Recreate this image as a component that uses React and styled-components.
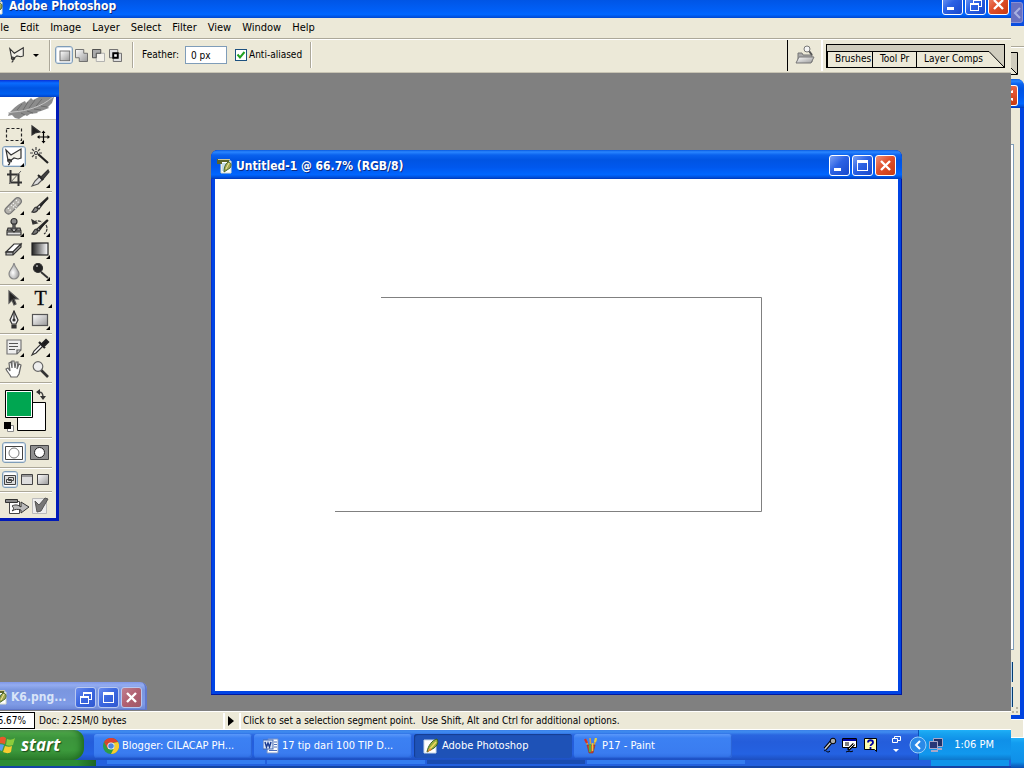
import React from 'react'
import styled, { createGlobalStyle, css } from 'styled-components'

const uiFont = '"DejaVu Sans Condensed", "Open Sans", sans-serif'
const face = '#ece9d8'

const GlobalStyle = createGlobalStyle`
  * { box-sizing: border-box; }
  html, body, #root { height: 100%; }
  body {
    margin: 0;
    overflow: hidden;
    font-family: ${uiFont};
    font-size: 10px;
    line-height: 14px;
    color: #000;
  }
  button, input {
    font: inherit;
    margin: 0;
    padding: 0;
    border: 0;
    background: none;
  }
  svg { display: block; flex: none; }
`

// desktop: the front screen, with slices of the one behind it at the right and bottom
const Desktop = styled.div`
  display: grid;
  grid-template-columns: minmax(0, 1fr) 13px;
  grid-template-rows: minmax(0, 1fr) 8px;
  height: 100vh;
  background: ${face};
`

const Screen = styled.main`
  display: flex;
  flex-direction: column;
  min-height: 0;
`

// ---------- caption ----------
const captionBlue = 'linear-gradient(#0a5be0 0, #2a86ff 2px, #0a62ee 5px, #0054e3 10px, #0058ee 60%, #0066ff 85%, #0050dc 94%, #0038b8 100%)'

const AppTitle = styled.header`
  display: flex;
  align-items: flex-end;
  gap: 5px;
  height: 18px;
  padding: 0 2px 3px 0;
  overflow: hidden;
  background: linear-gradient(#0055e5, #0060f8 60%, #0066ff 80%, #0048d0);
`

const TitleText = styled.h1`
  flex: 1;
  min-width: 0;
  margin: 0;
  overflow: hidden;
  white-space: nowrap;
  font-weight: bold;
  font-size: 12px;
  line-height: 18px;
  color: ${p => (p.$faded ? '#d8e4f8' : '#fff')};
  text-shadow: ${p => (p.$faded ? 'none' : '1px 1px 0 #0a2a80')};
`

const CaptionButtons = styled.div`
  display: flex;
  gap: 2px;
`

const CaptionButton = styled.button`
  flex: none;
  display: grid;
  place-items: center;
  width: 21px;
  height: 21px;
  border: 1px solid ${p => (p.$faded ? '#b8c8f0' : '#fff')};
  border-radius: 3px;
  background: ${p =>
    p.$close
      ? p.$faded
        ? 'linear-gradient(135deg, #c08090, #b06070 50%, #a05868)'
        : 'linear-gradient(135deg, #f09078, #e0502c 45%, #c83a10)'
      : p.$faded
        ? 'linear-gradient(135deg, #6a8cf0, #3c68e0 45%, #3058d0)'
        : 'linear-gradient(135deg, #7aa0f4, #2c62e4 45%, #1848cc)'};
`

const glyphs = {
  min: <path d="M4 12h7v3H4z" fill="#fff" />,
  max: <path d="M4 4h11v11H4zM5 7v7h9V7z" fill="#fff" fillRule="evenodd" />,
  restore: (
    <path d="M7 4h9v8h-3v4H4V8h3zM8 6v2h5v3h2V6zM5 10v5h7v-5z" fill="#fff" fillRule="evenodd" />
  ),
  close: <path d="M5 5l9 9M14 5l-9 9" stroke="#fff" strokeWidth="2.4" />,
}

function Caption({ kinds, faded }) {
  const names = { min: 'Minimize', max: 'Maximize', restore: 'Restore', close: 'Close' }
  return (
    <CaptionButtons>
      {kinds.map(kind => (
        <CaptionButton key={kind} aria-label={names[kind]} $close={kind === 'close'} $faded={faded}>
          <svg width="19" height="19" viewBox="0 0 19 19">{glyphs[kind]}</svg>
        </CaptionButton>
      ))}
    </CaptionButtons>
  )
}

// ---------- menu ----------
const MenuBar = styled.nav`
  display: flex;
  align-items: center;
  gap: 11px;
  height: 20px;
  background: ${face};
  font-size: 11px;
`

const MenuItem = styled.button`
  flex: none;
`

const CutMenuItem = styled(MenuItem)`
  display: flex;
  justify-content: flex-end;
  width: 9px;
  overflow: hidden;
`

// ---------- option bar ----------
const OptionBar = styled.div`
  display: flex;
  align-items: center;
  height: 35px;
  padding: 0 6px 1px 8px;
  border-top: 1px solid #aca899;
  border-bottom: 1px solid #c8c4b4;
  box-shadow: inset 0 1px 0 #fff;
  background: ${face};
`

const Rule = styled.span`
  flex: none;
  width: ${p => (p.$dark ? 1 : 2)}px;
  height: ${p => p.$h || 26}px;
  margin: 0 ${p => p.$after || 0}px 0 ${p => p.$before || 0}px;
  background: ${p => (p.$dark ? '#000' : p.$light ? '#fff' : 'linear-gradient(90deg, #aca899 50%, #fff 50%)')};
`

const IconButton = styled.button`
  flex: none;
  display: grid;
  place-items: center;
  width: ${p => p.$w || 17}px;
  height: ${p => p.$h || 18}px;
  ${p =>
    p.$on &&
    css`
      background: #fff;
      border: 1px solid #7f9db9;
      border-radius: 3px;
      box-shadow: inset 0 0 0 1px #d4dfea;
    `}
`

const Arrow = styled.button`
  flex: none;
  display: grid;
  place-items: center;
  width: 20px;
  height: 18px;
`

const Feather = styled.label`
  display: flex;
  align-items: center;
  gap: 6px;
  margin-left: 8px;

  input {
    width: 42px;
    height: 18px;
    padding-left: 5px;
    border: 1px solid #7f9db9;
    background: #fff;
  }
`

const Tick = styled.label`
  display: flex;
  align-items: center;
  gap: 2px;
  margin-left: 8px;

  input {
    appearance: none;
    width: 12px;
    height: 12px;
    border: 1px solid #1c5180;
    background: #fff;
  }
  span {
    display: grid;
  }
  span > * {
    grid-area: 1 / 1;
  }
  svg {
    pointer-events: none;
    visibility: hidden;
  }
  input:checked + svg {
    visibility: visible;
  }
`

const Spacer = styled.div`
  flex: 1;
`

const PaletteWell = styled.div`
  display: flex;
  align-items: flex-end;
  width: 179px;
  height: 24px;
  margin-top: 1px;
  border: 1px solid #000;
  background: #d0cdbe;
`

const PaletteTab = styled.button`
  flex: none;
  width: ${p => p.$w}px;
  height: 16px;
  padding-left: 7px;
  overflow: hidden;
  white-space: nowrap;
  text-align: left;
  border-top: 1px solid #000;
  border-left: 1px solid #000;
  background: ${face};
`

// ---------- workspace ----------
const Workspace = styled.section`
  position: relative;
  flex: 1;
  min-height: 0;
  overflow: hidden;
  background: #808080;
`

const Toolbox = styled.aside`
  position: absolute;
  left: 0;
  top: 7px;
  width: 59px;
  border: solid #0019b8;
  border-width: 0 3px 3px 0;
  background: ${face};
`

const ToolboxTitle = styled.div`
  height: 17px;
  margin-right: -3px;
  background: linear-gradient(#0831d9, #0a6cff 3px, #0054e3 8px, #0060f0 14px, #0040c8);
`

const Plume = styled.div`
  height: 23px;
  margin-bottom: 3px;
  border-bottom: 1px solid #c8c4b4;
  background: #fff;
`

const ToolGrid = styled.div`
  display: grid;
  grid-template-columns: 28px 24px;
  grid-auto-rows: 22px;
  place-items: center;
`

const ToolRow = styled.div`
  display: flex;
  align-items: center;
  gap: ${p => p.$gap || 2}px;
  height: ${p => p.$h}px;
  padding-left: ${p => p.$pad || 2}px;
`

const Groove = styled.hr`
  width: 52px;
  height: 2px;
  margin: 2px 0 1px;
  border: 0;
  background: linear-gradient(#aca899 50%, #fff 50%);
`

const DocWindow = styled.article`
  position: absolute;
  left: 211px;
  top: 77px;
  right: 109px;
  bottom: 16px;
  display: flex;
  flex-direction: column;
  padding: 0 4px 4px;
  border-radius: 7px 7px 0 0;
  background: #0044e4;
  box-shadow: inset -1px -1px 0 #0018a0, inset 1px 0 0 #0830c8;
`

const DocTitle = styled.div`
  flex: none;
  display: flex;
  align-items: center;
  gap: 3px;
  height: 29px;
  margin: 0 -4px;
  padding: 2px 6px 0;
  border-radius: 7px 7px 0 0;
  background: ${captionBlue};
`

const Canvas = styled.div`
  flex: 1;
  min-height: 0;
  overflow: hidden;
  background: #fff;
`

const MiniWindow = styled.article`
  position: absolute;
  left: 0;
  bottom: 1px;
  display: flex;
  align-items: center;
  gap: 3px;
  width: 147px;
  height: 28px;
  padding: 2px 5px 0 0;
  overflow: hidden;
  border-radius: 0 7px 0 0;
  background: linear-gradient(#8098e8, #94acf0 3px, #7a96df 8px, #7f9be6 22px, #6c86d4);
  box-shadow: inset -2px -1px 0 #6078cc;
`

// ---------- status bar ----------
const StatusBar = styled.footer`
  flex: none;
  display: flex;
  align-items: center;
  height: 19px;
  border-top: 1px solid #fff;
  border-bottom: 1px solid #fff;
  background: ${face};
`

const Zoom = styled.div`
  display: flex;
  justify-content: flex-end;
  width: 35px;
  height: 17px;
  padding-right: 8px;
  overflow: hidden;
  border: 1px solid #000;
  border-left: 0;
  line-height: 16px;
  background: #fff;
`

const DocSize = styled.div`
  width: 188px;
  padding-left: 4px;
`

const Hint = styled.div`
  flex: 1;
  padding-left: 2px;
  white-space: pre;
  overflow: hidden;
`

// ---------- taskbar ----------
const barBlue = 'linear-gradient(#3a80e8 0, #3f8cf0 2px, #2a66e0 5px, #245ddb 12px, #2462e2 80%, #1d4fc0 100%)'

const Taskbar = styled.footer`
  flex: none;
  display: flex;
  align-items: stretch;
  height: 30px;
  background: ${barBlue};
  font-size: 11px;
`

const Start = styled.button`
  flex: none;
  display: flex;
  align-items: center;
  gap: 5px;
  width: 84px;
  margin-right: 10px;
  overflow: hidden;
  border-radius: 0 10px 12px 0;
  background: linear-gradient(#5a9e56 0, #4aa446 3px, #3c943c 8px, #3c9a3c 20px, #2c7c2c 100%);
  box-shadow: inset -5px 0 6px -2px #1e6a20;
  color: #fff;
  font-family: "Open Sans", sans-serif;
  font-style: italic;
  font-weight: bold;
  font-size: 17px;
  text-shadow: 1px 1px 1px #1c4c1c;
`

const Task = styled.button`
  flex: 0 1 158px;
  min-width: 0;
  display: flex;
  align-items: center;
  gap: 3px;
  height: 24px;
  margin: 4px 2px 0 0;
  padding-left: 9px;
  border-radius: 3px;
  background: ${p => (p.$on ? '#1e52b7' : 'linear-gradient(#5a98fa, #3c81f3 4px, #3a7cf0 80%, #3070e4)')};
  box-shadow: ${p => (p.$on ? 'inset 1px 1px 1px #143c90' : 'inset -1px -1px 1px #2a62d4')};
  color: #fff;
  white-space: nowrap;
`

const Tray = styled.div`
  flex: none;
  display: flex;
  align-items: center;
  gap: 1px;
  width: 93px;
  padding-right: 17px;
  border-left: 1px solid #0a50b8;
  background: linear-gradient(#20b0f8 0, #18a4f0 3px, #0f90e8 10px, #1198ee 80%, #0c78cc 100%);
  color: #fff;

  time { margin-left: auto; }
  svg:first-child { margin-left: -10px; }
`

const LangBar = styled.div`
  display: flex;
  align-items: center;
  gap: 5px;
  padding-right: 16px;
`

// ---------- slices of the screen behind ----------
const BackRight = styled.div`
  grid-row: 1 / 3;
  grid-column: 2;
  display: flex;
  flex-direction: column;
  overflow: hidden;
  background: ${face};
`

const BackTitle = styled.div`
  height: 26px;
  padding-top: 2px;
  background: #0a4ee0;
`

const DimClose = styled.div`
  display: grid;
  place-items: center;
  width: 12px;
  height: 21px;
  border: 1px solid #8890d8;
  border-left: 0;
  border-radius: 0 3px 3px 0;
  background: #6870c0;
`

const BackBar = styled.div`
  height: 33px;
  margin-top: 20px;
  padding-top: 5px;
  border-top: 1px solid #aca899;
  box-shadow: inset 0 1px 0 #fff;
`

const BackWindow = styled.div`
  flex: 1;
  display: flex;
  flex-direction: column;
  border: solid #0044e0;
  border-width: 0 4px 4px 0;
  border-radius: 0 7px 0 0;
  background: ${face};
`

const BackCaption = styled.div`
  height: 29px;
  margin-right: -4px;
  padding-top: 6px;
  border-radius: 0 7px 0 0;
  background: ${captionBlue};
`

const BackClose = styled.div`
  display: grid;
  align-items: center;
  width: 7px;
  height: 21px;
  border: 1px solid #fff;
  border-left: 0;
  border-radius: 0 3px 3px 0;
  background: linear-gradient(#e86848, #e0502c 45%, #c83a10);
`

const BackField = styled.div`
  flex: 1;
  width: 3px;
  margin: 36px 0 12px;
  border: solid #7f9db9;
  border-width: 1px 1px 1px 0;
  background: #fff;
`

const BackButton = styled.div`
  width: 2px;
  height: 20px;
  border-right: 1px solid #003c74;
  background: #b8d4f0;

  & + & { margin-top: 5px; }
`

const BackStatus = styled.div`
  height: 19px;
  border: solid #fff;
  border-width: 1px 1px 1px 0;
`

const BackTray = styled.div`
  height: 30px;
  background: linear-gradient(#20b0f8, #129cf0 5px, #0f90e8 80%, #0a4cb0);
`

const BackBottom = styled.div`
  display: flex;
  height: 8px;
  border-bottom: 2px solid #1444a4;
  background: #2360de;
`

const BackPiece = styled.span`
  flex: none;
  width: ${p => p.$w}px;
  height: ${p => p.$h || 4}px;
  margin-right: 2px;
  background: ${p => p.$c};
`

// ---------- drawings ----------
const Corner = () => <path d="M20 16v4h-4z" fill="#000" />

function Icon({ children, more, size = 20 }) {
  return (
    <svg width={size} height={size} viewBox="0 0 20 20" fill="none" stroke="#333" strokeWidth="1.2">
      {children}
      {more && <g stroke="none"><Corner /></g>}
    </svg>
  )
}

const lasso = (
  <>
    <path d="M2 3l5 5 10-6v9l-3 1-4-1-4 3-2-1z" fill="#f2f0e8" />
    <path d="M6 12.500c-3-1-3 3 0 2.500 2 0 2-2 0-2.500M5 15c1 1 1 2-1 3" />
  </>
)

const tools = {
  marquee: <rect x="2.500" y="4.500" width="15" height="12" strokeDasharray="3 2" stroke="#222" />,
  move: (
    <>
      <path d="M2 2v9l3-2 5-1z" fill="#222" />
      <path d="M13.500 8v10M8.500 13h10" stroke="#000" />
      <path d="M13.500 6.500l2 2.500h-4zM13.500 19.500l2-2.500h-4zM7 13l2.500-2v4zM20 13l-2.500-2v4z" fill="#000" stroke="none" />
    </>
  ),
  lasso,
  wand: (
    <>
      <path d="M8 8l10 9" stroke="#222" strokeWidth="2.200" />
      <path d="M6 1v3M6 10v3M0 7h3M9 7h3M2 3l2 2M10 3L8 5M2 11l2-2" stroke="#444" />
      <circle cx="6" cy="7" r="1.500" fill="#fff" />
    </>
  ),
  crop: (
    <>
      <path d="M6.500 2v12.500H18M3 6.500h11.500V18" strokeWidth="2" />
      <path d="M5 16L17 3" stroke="#666" strokeWidth="1" />
    </>
  ),
  slice: (
    <>
      <path d="M2 18l3-5 5-5 3 3-5 5z" fill="#ddd" stroke="#555" />
      <path d="M8 7l5 5" stroke="#222" strokeWidth="2" />
      <path d="M11 9l7-7 1 2-6 7z" fill="#444" />
    </>
  ),
  heal: (
    <>
      <rect x="-1" y="7" width="20" height="7" rx="3.500" transform="rotate(-45 9.500 10.500)" fill="#b4b2ac" stroke="#777" />
      <path d="M7 10l5 4M9 8l4 4M4 13l3 3M12 5l3 3" stroke="#fff" strokeDasharray="1 1.500" />
    </>
  ),
  brush: (
    <>
      <path d="M2 17c3 1 6-1 6-3l-2-2c-2 0-2 3-4 5z" fill="#888" />
      <path d="M7 12l2 2 9-12z" fill="#eee" />
      <path d="M10 11l8-8" stroke="#222" strokeWidth="1.800" />
    </>
  ),
  stamp: (
    <>
      <circle cx="10" cy="4.500" r="3" fill="#888" />
      <path d="M9 7v4H4l-1 3h14l-1-3h-5V7z" fill="#888" />
      <path d="M3 15h14v3H3z" fill="#ddd" />
      <path d="M7 12l3 3 3-3z" fill="#fff" />
    </>
  ),
  history: (
    <>
      <path d="M2 17c3 1 6-1 6-3l-2-2c-2 0-2 3-4 5z" fill="#777" />
      <path d="M7 12l2 2 8-11z" fill="#ddd" />
      <path d="M9 12l9-9" stroke="#222" strokeWidth="1.800" />
      <path d="M4 5c3-2 6-1 8 0M16 8c2 3 1 7-2 9" strokeDasharray="3 1" />
      <path d="M2 3l1 4 4-1z" fill="#333" />
    </>
  ),
  eraser: (
    <>
      <path d="M2 13l8-8h7l-8 8z" fill="#fff" />
      <path d="M2 13v3h7l8-8V5l-8 8z" fill="#bbb" />
      <path d="M2 13h7v3" />
    </>
  ),
  gradient: <rect x="2" y="4" width="16" height="12" fill="url(#ramp)" stroke="#222" />,
  blur: <path d="M10 2c1 5 5 7 5 11a5 5 0 01-10 0c0-4 4-6 5-11z" fill="url(#drop)" stroke="#888" />,
  dodge: (
    <>
      <circle cx="8" cy="7" r="4.500" fill="#222" />
      <circle cx="7" cy="5" r="1" fill="#aaa" stroke="none" />
      <path d="M11 11l7 6" strokeWidth="2" />
    </>
  ),
  select: <path d="M5 3v12l3-3 2 5 2-1-2-5h4z" fill="#222" stroke="#555" />,
  pen: (
    <>
      <path d="M10 1l4 9-2 4H8l-2-4z" fill="#eee" />
      <path d="M10 1v9M8 15h4v3H8z" fill="#333" />
      <circle cx="10" cy="10" r="1" fill="#000" />
    </>
  ),
  shape: <rect x="2.500" y="4.500" width="15" height="11" fill="url(#soft)" stroke="#555" />,
  notes: (
    <>
      <path d="M3 3h14v10l-4 4H3z" fill="#eee" stroke="#777" />
      <path d="M5 6.500h9M5 9.500h9M5 12.500h6M13 17v-4h4" stroke="#555" />
    </>
  ),
  dropper: (
    <>
      <path d="M2 18l2-4 7-7 2 2-7 7z" fill="#fff" />
      <path d="M9 5l6 6M12 7l4-4 2 2-4 4z" fill="#111" strokeWidth="2.200" stroke="#222" />
    </>
  ),
  hand: (
    <path d="M7 18c-1-3-4-5-5-8l2-1 2 3-1-8 2-1 1 6V2h2l1 7 1-6h2l-1 7 2-5 2 1-2 9-2 3z" fill="#fff" stroke="#666" />
  ),
  zoom: (
    <>
      <path d="M11 11l7 7" stroke="#333" strokeWidth="2.600" />
      <circle cx="8" cy="7.500" r="4.800" fill="#eee" stroke="#666" />
    </>
  ),
}

const Defs = () => (
  <svg width="0" height="0" aria-hidden="true">
    <defs>
      <linearGradient id="ramp"><stop stopColor="#222" /><stop offset="1" stopColor="#fff" /></linearGradient>
      <linearGradient id="soft" x2="1" y2="1"><stop stopColor="#fff" /><stop offset="1" stopColor="#999" /></linearGradient>
      <radialGradient id="drop" cx=".4" cy=".6"><stop stopColor="#fff" /><stop offset="1" stopColor="#aaa" /></radialGradient>
    </defs>
  </svg>
)

const TypeTool = styled.button`
  display: flex;
  align-items: flex-end;
  gap: 1px;
  padding-left: 6px;
  font-family: "Liberation Serif", serif;
  font-size: 20px;
  line-height: 20px;
  -webkit-text-stroke: 0.4px #222;
`

function Tool({ name, on, plain }) {
  if (name === 'type') {
    return (
      <TypeTool aria-label="Type">
        T
        <svg width="4" height="4" viewBox="16 16 4 4"><Corner /></svg>
      </TypeTool>
    )
  }
  return (
    <IconButton $w={24} $h={21} $on={on} aria-label={name}>
      <Icon more={!plain}>{tools[name]}</Icon>
    </IconButton>
  )
}

function PsIcon({ shift = 0 }) {
  return (
    <svg width={16 - shift} height="16" viewBox={`${shift} 0 ${16 - shift} 16`}>
      <path d="M4 3h10v12H4z" fill="#fff" stroke="#d8dcc8" />
      <path d="M5 5h5v8H5z" fill="#c4dce8" />
      <path d="M0 1h12v3H5v2H0z" fill="#5c6428" />
      <path d="M1 1.500h12" stroke="#c8c8a0" />
      <path d="M11 4c3 0 4 3 2 6l-6 4c0-4 1-8 4-10z" fill="#a4a850" stroke="#48682c" />
      <path d="M9 11l3-6" stroke="#f0e8a0" />
    </svg>
  )
}

const AppTaskIcon = () => (
  <svg width="16" height="16" viewBox="0 0 16 16">
    <path d="M1 2h12v13H1z" fill="#fff" stroke="#c8d8e8" />
    <path d="M14 1c2 3 0 7-3 9l-7 4c1-6 5-12 10-13z" fill="#98b040" stroke="#385c20" />
    <path d="M6 12l7-8" stroke="#f4d860" strokeWidth="1.500" />
    <path d="M4 14l3-4 2 2z" fill="#e88830" />
  </svg>
)

const taskIcons = {
  chrome: (
    <svg width="16" height="16" viewBox="0 0 16 16">
      <circle cx="8" cy="8" r="8" fill="#2c9c46" />
      <path d="M1 4a8 8 0 0114 0L8 5z" fill="#e0402f" />
      <path d="M15 4a8 8 0 01-7 12l4-8-2-3z" fill="#f8cc30" />
      <path d="M1 4l4 7 3-6z" fill="#e0402f" />
      <circle cx="8" cy="8" r="3.600" fill="#fff" />
      <circle cx="8" cy="8" r="2.800" fill="#4a86e0" />
    </svg>
  ),
  word: (
    <svg width="16" height="16" viewBox="0 0 16 16">
      <path d="M5 1h10v14H4z" fill="#fff" stroke="#7a94c8" />
      <path d="M11 4h3M11 6.500h3M11 9h3M6 12.500h8" stroke="#4a6cb8" />
      <rect x="0" y="2" width="10" height="9" fill="#d8e4f8" stroke="#4468b0" />
      <path d="M2 4l1.500 5L5 5l1.500 4L8 4" stroke="#1c3c90" fill="none" strokeWidth="1.400" />
    </svg>
  ),
  paint: (
    <svg width="16" height="16" viewBox="0 0 16 16">
      <path d="M3 2l3 9M7 0l1 10M13 1l-3 9" stroke="#d8a040" strokeWidth="1.600" />
      <path d="M2 1l2 4" stroke="#d83020" strokeWidth="2.200" />
      <path d="M13 0l-1 4" stroke="#e8d040" strokeWidth="2.200" />
      <path d="M4 7h8l-2 8H6z" fill="#c84830" stroke="#803828" strokeWidth=".6" />
      <path d="M7 6v8" stroke="#50b040" strokeWidth="2" />
      <path d="M9.500 5v8" stroke="#e8c840" strokeWidth="1.500" />
    </svg>
  ),
}

const WinFlag = () => (
  <svg width="16" height="20" viewBox="4 0 16 20">
    <path d="M3 3c3-2 5-1 7 0L9 9C6 8 4 8 1 9z" fill="#e8582c" />
    <path d="M11 4c3 1 5 1 8-1l-2 7c-2 1-5 1-7 0z" fill="#8ccc3c" />
    <path d="M1 10c3-1 5-1 7 0l-2 6c-2-1-4-1-7 0z" fill="#5c9cf0" />
    <path d="M9 11c3 1 5 1 7 0l-1 6c-3 2-5 1-8 0z" fill="#f8cc30" />
  </svg>
)

const menus = ['Edit', 'Image', 'Layer', 'Select', 'Filter', 'View', 'Window', 'Help']

const modes = [
  ['New', <rect x="4" y="4" width="13" height="13" fill="url(#soft)" stroke="#666" />],
  ['Add', <path d="M2 2h11v5h5v11H7v-5H2z" fill="url(#soft)" stroke="#666" />],
  ['Subtract', <><path d="M7 7h11v11H7z" fill="#f4f2ea" stroke="#aaa" /><path d="M2 2h11v5H7v6H2z" fill="#aaa" stroke="#444" /></>],
  ['Intersect', <><path d="M2 2h11v11H2zM7 7h11v11H7z" fill="#ddd" stroke="#666" /><path d="M7 7h6v6H7z" fill="#fff" stroke="#000" strokeWidth="2.500" /></>],
]

function Options() {
  return (
    <OptionBar>
      <Icon size={18}>{lasso}</Icon>
      <Arrow aria-label="Tool presets">
        <svg width="6" height="3" viewBox="0 0 6 3"><path d="M0 0h6L3 3z" /></svg>
      </Arrow>
      <Rule $h={31} $before={3} $after={4} />
      {modes.map(([name, art], i) => (
        <IconButton key={name} $on={i === 0} $w={i === 0 ? 18 : 17} aria-label={name}>
          <Icon size={15}>{art}</Icon>
        </IconButton>
      ))}
      <Rule $before={8} />
      <Feather>
        Feather:
        <input defaultValue="0 px" />
      </Feather>
      <Tick>
        <span>
          <input type="checkbox" defaultChecked />
          <svg width="12" height="12" viewBox="0 0 12 12">
            <path d="M2.500 5.500l2.500 3 4.500-5.500" stroke="#21a121" strokeWidth="2" fill="none" />
          </svg>
        </span>
        Anti-aliased
      </Tick>
      <Rule $before={8} />
      <Spacer />
      <Rule $dark $h={31} $after={7} />
      <IconButton $w={20} $h={20} aria-label="File Browser">
        <svg width="20" height="20" viewBox="0 0 20 20" stroke="#777" fill="#ddd">
          <path d="M3 17V8h4l1 2h9v7z" fill="#aaa" />
          <path d="M1 18l3-6h15l-3 6z" fill="url(#soft)" />
          <path d="M14 6l3 4" stroke="#555" strokeWidth="2" />
          <circle cx="12" cy="4" r="3" fill="#f4f4f4" />
        </svg>
      </IconButton>
      <Rule $light $h={31} $before={6} $after={3} />
      <PaletteWell>
        <PaletteTab $w={45}>Brushes</PaletteTab>
        <PaletteTab $w={44}>Tool Pr</PaletteTab>
        <PaletteTab $w={73}>Layer Comps</PaletteTab>
        <svg width="15" height="16" viewBox="0 0 15 16">
          <path d="M0 0l15 16H0z" fill={face} />
          <path d="M0 .5l15 15.500" stroke="#000" />
        </svg>
      </PaletteWell>
    </OptionBar>
  )
}

function Tools() {
  return (
    <Toolbox aria-label="Tools">
      <ToolboxTitle />
      <Plume>
        <svg width="56" height="22" viewBox="0 0 56 22">
          <path d="M9 16c5-5 9-9 16-12l1 2 5-5 2 2 6-3h15l-2 6-4 4 1 1-8 3-4 1 1 1-8 1-3 2-2-1-3 2-3 2-4-1-3-3-4 1z" fill="#8c8c8c" />
          <path d="M8 16l5-1c14-1 28-5 40-15" stroke="#c4c4c4" fill="none" />
          <path d="M17 13l5-6M23 13l5-8M29 11l6-8M36 9l6-7M21 16l4 2M27 14l6 2M34 12l7 1M41 9l6 1" stroke="#6c6c6c" fill="none" />
        </svg>
      </Plume>
      <ToolGrid>
        <Tool name="marquee" />
        <Tool name="move" plain />
        <Tool name="lasso" on />
        <Tool name="wand" plain />
        <Tool name="crop" plain />
        <Tool name="slice" />
      </ToolGrid>
      <Groove />
      <ToolGrid>
        {['heal', 'brush', 'stamp', 'history', 'eraser', 'gradient', 'blur', 'dodge'].map(t => (
          <Tool key={t} name={t} />
        ))}
      </ToolGrid>
      <Groove />
      <ToolGrid>
        {['select', 'type', 'pen', 'shape'].map(t => <Tool key={t} name={t} />)}
      </ToolGrid>
      <Groove />
      <ToolGrid>
        <Tool name="notes" />
        <Tool name="dropper" />
        <Tool name="hand" plain />
        <Tool name="zoom" plain />
      </ToolGrid>
      <svg width="56" height="55" viewBox="0 0 56 55">
        <path d="M0 2.500h52" stroke="#aca899" />
        <path d="M0 3.500h52" stroke="#fff" />
        <path d="M17.500 22.500h28v28h-28z" fill="#fff" stroke="#000" />
        <path d="M5.500 10.500h27v27h-27z" fill="#fff" stroke="#000" />
        <path d="M7 12h24v24H7z" fill="#00a651" />
        <path d="M38 12.500c4-1 5 1 5 5" stroke="#444" strokeWidth="1.500" fill="none" />
        <path d="M36 12l4-3v6zM40 16h6l-3 4z" fill="#333" />
        <path d="M7.500 45.500h6v6h-6z" fill="#fff" stroke="#888" />
        <path d="M4 42h7v7H4z" />
      </svg>
      <Groove />
      <ToolRow $h={25} $gap={4}>
        <IconButton $on $w={24} $h={21} aria-label="Standard mode">
          <svg width="18" height="14" viewBox="0 0 18 14">
            <path d="M.5.5h17v13H.5z" fill="#fff" stroke="#444" />
            <circle cx="9" cy="7" r="5" fill="none" stroke="#777" />
          </svg>
        </IconButton>
        <IconButton $w={19} $h={21} aria-label="Quick mask mode">
          <svg width="19" height="15" viewBox="0 0 19 15">
            <path d="M.5.500h18v14H.5z" fill="#909090" stroke="#444" />
            <circle cx="9.500" cy="7.500" r="5" fill="#fff" stroke="#222" />
          </svg>
        </IconButton>
      </ToolRow>
      <Groove />
      <ToolRow $h={19}>
        <IconButton $on $w={16} $h={17} aria-label="Standard screen">
          <svg width="12" height="12" viewBox="0 0 12 12" fill="#ddd" stroke="#444">
            <path d="M.5 1.500h11v9H.5z" /><path d="M4.500 3.500h5v3h-5zM2.500 5.500h5v3h-5z" />
          </svg>
        </IconButton>
        <IconButton $w={14} $h={17} aria-label="Full screen with menu bar">
          <svg width="12" height="12" viewBox="0 0 12 12">
            <path d="M.5.5h11v10H.5z" fill="#ddd" stroke="#444" /><path d="M1 2h10" stroke="#555" />
          </svg>
        </IconButton>
        <IconButton $w={14} $h={17} aria-label="Full screen">
          <svg width="12" height="12" viewBox="0 0 12 12">
            <path d="M.5.5h11v10H.5z" fill="url(#soft)" stroke="#444" />
          </svg>
        </IconButton>
      </ToolRow>
      <Groove />
      <ToolRow $h={24} $pad={5}>
        <IconButton $w={25} $h={20} aria-label="Edit in ImageReady">
          <svg width="25" height="18" viewBox="0 0 25 18">
            <path d="M4.500 4.500h10v12h-10z" fill="#fff" stroke="#444" />
            <path d="M0.500 2.500h12v3h-12z" fill="#888" stroke="#333" />
            <path d="M7 9c4-2 6-1 9 1V5l8 5-8 6v-3c-3-1-6-1-9 1 2-2 2-3 0-5z" fill="#bbb" stroke="#333" />
          </svg>
        </IconButton>
        <IconButton $w={18} $h={20} aria-label="Adobe Online">
          <svg width="18" height="18" viewBox="0 0 18 18">
            <path d="M.5 1.500h14v15H.5z" fill="#eee" stroke="#bbb" />
            <path d="M3 4l4 4 6-7 3 1-7 12-4 1z" fill="#777" stroke="#555" />
          </svg>
        </IconButton>
      </ToolRow>
    </Toolbox>
  )
}

function App() {
  return (
    <>
      <GlobalStyle />
      <Desktop>
        <Screen>
          <AppTitle>
            <PsIcon shift={12} />
            <TitleText>Adobe Photoshop</TitleText>
            <Caption kinds={['min', 'restore', 'close']} />
          </AppTitle>
          <MenuBar>
            <CutMenuItem>File</CutMenuItem>
            {menus.map(m => <MenuItem key={m}>{m}</MenuItem>)}
          </MenuBar>
          <Options />
          <Workspace>
            <Defs />
            <DocWindow>
              <DocTitle>
                <PsIcon />
                <TitleText>Untitled-1 @ 66.7% (RGB/8)</TitleText>
                <Caption kinds={['min', 'max', 'close']} />
              </DocTitle>
              <Canvas>
                <svg width="683" height="512" viewBox="0 0 683 512">
                  <path d="M166 118.500h380.500v214H120" fill="none" stroke="#808080" />
                </svg>
              </Canvas>
            </DocWindow>
            <Tools />
            <MiniWindow>
              <PsIcon shift={8} />
              <TitleText $faded>K6.png...</TitleText>
              <Caption kinds={['restore', 'max', 'close']} faded />
            </MiniWindow>
          </Workspace>
          <StatusBar>
            <Zoom>66.67%</Zoom>
            <DocSize>Doc: 2.25M/0 bytes</DocSize>
            <Rule $h={16} $light $after={3} />
            <svg width="6" height="10" viewBox="0 0 6 10"><path d="M0 0l6 5-6 5z" /></svg>
            <Rule $h={16} $light $before={5} />
            <Hint>{'Click to set a selection segment point.  Use Shift, Alt and Ctrl for additional options.'}</Hint>
          </StatusBar>
          <Taskbar>
            <Start><WinFlag />start</Start>
            <Task>{taskIcons.chrome}Blogger: CILACAP PH...</Task>
            <Task>{taskIcons.word}17 tip dari 100 TIP D...</Task>
            <Task $on><AppTaskIcon />Adobe Photoshop</Task>
            <Task>{taskIcons.paint}P17 - Paint</Task>
            <Spacer />
            <LangBar>
              <svg width="14" height="16" viewBox="0 0 14 16">
                <path d="M2 12l7-8" stroke="#000" strokeWidth="3.500" />
                <path d="M2 12l7-8" stroke="#ccc" strokeWidth="1.500" />
                <circle cx="10" cy="4" r="2.800" fill="#aaa" stroke="#000" />
                <path d="M1 14c2-2 3 3 6 0" fill="none" stroke="#000" />
              </svg>
              <svg width="16" height="16" viewBox="0 0 16 16">
                <path d="M.5 1.500h14v9H.5z" fill="#fff" stroke="#000" />
                <path d="M1 2h13v2H1z" fill="#0000a0" />
                <path d="M3 6h4M3 8h4" stroke="#000" />
                <path d="M6 13l6-6" stroke="#000" strokeWidth="3" />
                <path d="M7 12l5-5" stroke="#ddd" />
                <path d="M4 15c3-2 4 1 7-1" stroke="#000" fill="none" />
              </svg>
              <svg width="16" height="16" viewBox="0 0 16 16">
                <path d="M1.500 1.500h12v13l-2-2h-10z" fill="#ffffb0" stroke="#000" />
                <path d="M5 5.500c0-3 5-3 5 0 0 2-2.500 1.500-2.500 3.500M7.500 10v2" fill="none" stroke="#0000a0" strokeWidth="1.800" />
              </svg>
              <svg width="18" height="18" viewBox="0 0 18 18" fill="none" stroke="#fff">
                <path d="M10.500 3V.5h6v4H13M8.500 2.500h5v4h-5z" />
                <path d="M9 13h6l-3 3z" fill="#fff" stroke="none" />
              </svg>
            </LangBar>
            <Tray>
              <svg width="18" height="18" viewBox="0 0 18 18">
                <circle cx="9" cy="9" r="8" fill="#2a8ae8" stroke="#9cd0f8" />
                <path d="M11 5L7 9l4 4" fill="none" stroke="#fff" strokeWidth="2" />
              </svg>
              <svg width="16" height="16" viewBox="0 0 16 16" stroke="#a8a8c8">
                <path d="M5.500 1.500h9v8h-9z" fill="#203068" />
                <path d="M1.500 4.500h8v7h-8z" fill="#283878" />
                <path d="M3 14h7M9 12h5" strokeWidth="2" />
              </svg>
              <time>1:06 PM</time>
            </Tray>
          </Taskbar>
        </Screen>
        <BackRight>
          <BackTitle>
            <DimClose>
              <svg width="8" height="14" viewBox="0 0 8 14"><path d="M7 2L2 7l5 5" stroke="#a8b0e0" strokeWidth="2" fill="none" /></svg>
            </DimClose>
          </BackTitle>
          <BackBar>
            <svg width="7" height="23" viewBox="0 0 7 23">
              <path d="M0 .5h6.500v22H0" fill="#d0cdbe" stroke="#000" />
              <path d="M0 16l6 6H0z" fill={face} /><path d="M0 16l6 6" stroke="#000" />
            </svg>
          </BackBar>
          <BackWindow>
            <BackCaption>
              <BackClose>
                <svg width="3" height="11" viewBox="0 0 3 11" fill="#fff"><path d="M0 1l2-1v3H0zM0 8h2v3l-2-1z" /></svg>
              </BackClose>
            </BackCaption>
            <BackField />
            <BackButton />
            <BackButton />
            <svg width="9" height="8" viewBox="0 0 9 8" fill="#b8b4a0">
              <path d="M5 0h2v2H5zM1 4h2v2H1zM5 4h2v2H5z" />
            </svg>
          </BackWindow>
          <BackStatus />
          <BackTray />
        </BackRight>
        <BackBottom>
          <BackPiece $w={96} $h={6} $c="linear-gradient(90deg, #2c8c34 80%, #1c6424)" />
          <BackPiece $w={7} $c="transparent" />
          <BackPiece $w={158} $c="#347cf0" />
          <BackPiece $w={158} $c="#347cf0" />
          <BackPiece $w={158} $c="#1a4cb0" />
          <BackPiece $w={158} $c="#347cf0" />
          <Spacer />
          <BackPiece $w={78} $h={6} $c="#0f94ea" />
        </BackBottom>
      </Desktop>
    </>
  )
}

export default App
